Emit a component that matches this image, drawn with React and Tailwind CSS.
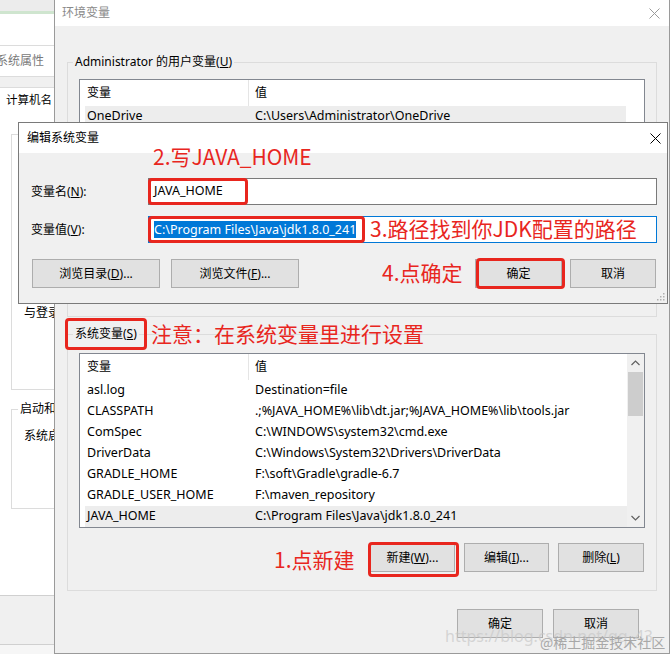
import { useState } from "react";

const userRows = [["OneDrive", "C:\\Users\\Administrator\\OneDrive"]];

const sysRows = [
  ["asl.log", "Destination=file"],
  ["CLASSPATH", ".;%JAVA_HOME%\\lib\\dt.jar;%JAVA_HOME%\\lib\\tools.jar"],
  ["ComSpec", "C:\\WINDOWS\\system32\\cmd.exe"],
  ["DriverData", "C:\\Windows\\System32\\Drivers\\DriverData"],
  ["GRADLE_HOME", "F:\\soft\\Gradle\\gradle-6.7"],
  ["GRADLE_USER_HOME", "F:\\maven_repository"],
  ["JAVA_HOME", "C:\\Program Files\\Java\\jdk1.8.0_241"],
];

function CloseX({ color = "#000" }) {
  return (
    <svg width="11" height="11" viewBox="0 0 11 11">
      <path d="M0.5 0.5 L10.5 10.5 M10.5 0.5 L0.5 10.5" stroke={color} strokeWidth="1" />
    </svg>
  );
}

function Btn({ children, className = "" }) {
  return (
    <div className={"flex items-center justify-center h-[29px] bg-[#e1e1e1] border border-[#adadad] text-[12px] text-black " + className}>
      {children}
    </div>
  );
}

function ListView({ rows, selected, height, scroll }) {
  return (
    <div className={"ml-[11px] w-[566px] border border-[#828790] bg-white flex " + height}>
      <div className="flex-1 flex flex-col overflow-hidden">
        <div className="flex h-[26px] items-center text-[12px]">
          <div className="w-[169px] h-full border-r border-[#e5e5e5] pl-[7px] flex items-center">变量</div>
          <div className="pl-[6px]">值</div>
        </div>
        {rows.map(([k, v]) => (
          <div
            key={k}
            className={"flex h-[21px] items-center text-[12.5px] ml-[5px] " + (k === selected ? "bg-[#ededed]" : "")}
          >
            <div className="w-[163px] pl-[2px] whitespace-nowrap">{k}</div>
            <div className="pl-[7px] whitespace-nowrap">{v}</div>
          </div>
        ))}
      </div>
      {scroll ? (
        <div className="w-[17px] bg-[#f0f0f0] flex flex-col items-center">
          <svg className="mt-[6px]" width="9" height="6" viewBox="0 0 9 6">
            <path d="M0.5 5 L4.5 1 L8.5 5" fill="none" stroke="#606060" strokeWidth="1.2" />
          </svg>
          <div className="mt-[6px] w-[15px] h-[44px] bg-[#cdcdcd]" />
          <div className="flex-1" />
          <svg className="mb-[6px]" width="9" height="6" viewBox="0 0 9 6">
            <path d="M0.5 1 L4.5 5 L8.5 1" fill="none" stroke="#606060" strokeWidth="1.2" />
          </svg>
        </div>
      ) : (
        <div className="w-[18px] bg-white" />
      )}
    </div>
  );
}

export default function App() {
  const [value] = useState("C:\\Program Files\\Java\\jdk1.8.0_241");

  return (
    <div className="relative w-[671px] h-[654px] overflow-hidden bg-white font-['Noto_Sans','Noto_Sans_CJK_SC',sans-serif] text-black">
      {/* background window: system properties */}
      <div className="absolute left-0 top-0 w-[54px] h-[654px] overflow-hidden bg-white flex flex-col text-[12px]">
        <div className="h-[11px] bg-[#ececec] shrink-0" />
        <div className="h-[3px] bg-[#cfe5cf] shrink-0" />
        <div className="h-[32px] bg-white border-b border-[#dcdcdc] shrink-0" />
        <div className="h-[31px] border-b border-[#dcdcdc] flex items-center text-[#7a7a7a] whitespace-nowrap -ml-[4px] shrink-0">系统属性</div>
        <div className="h-[10px] bg-[#f0f0f0] shrink-0" />
        <div className="h-[24px] border-t border-[#dcdcdc] flex items-center pl-[6px] text-[11.5px] whitespace-nowrap shrink-0">计算机名</div>
        <div className="ml-[11px] mt-[23px] w-[80px] h-[256px] border border-[#dcdcdc] pl-[12px] pt-[169px] whitespace-nowrap shrink-0">与登录</div>
        <div className="relative ml-[11px] mt-[19px] w-[80px] h-[100px] border border-[#dcdcdc] pl-[12px] pt-[17px] whitespace-nowrap shrink-0">
          <span className="absolute -top-[9px] left-[6px] px-[2px] bg-white leading-[16px]">启动和</span>
          系统启
        </div>
        <div className="flex-1" />
        <div className="h-[49px] border-t border-[#d0d0d0] bg-[#f0f0f0] shrink-0" />
        <div className="h-[10px] border-t border-[#d0d0d0] bg-[#f6f6f6] shrink-0" />
      </div>

      {/* environment variables window */}
      <div className="absolute left-[54px] top-0 w-[616px] h-[654px] border-l border-r border-b border-[#9a9a9a] bg-[#f0f0f0] flex flex-col">
        <div className="h-[26px] bg-white flex items-center justify-between pl-[7px] pr-[9px] shrink-0">
          <span className="text-[12px] text-[#8a8a8a]">环境变量</span>
          <CloseX color="#9a9a9a" />
        </div>
        <div className="flex flex-col pl-[12px]">
          <div className="relative mt-[36px] w-[590px] h-[255px] border border-[#dcdcdc]">
            <span className="absolute -top-[9px] left-[5px] px-[2px] bg-[#f0f0f0] text-[12px] leading-[16px] whitespace-nowrap">
              Administrator 的用户变量(<u>U</u>)
            </span>
            <div className="mt-[16px]">
              <ListView rows={userRows} selected="OneDrive" height="h-[200px]" />
            </div>
          </div>

          <div className="relative mt-[17px] w-[590px] h-[257px] border border-[#dcdcdc] flex flex-col">
            <span className="absolute -top-[9px] left-[5px] px-[2px] bg-[#f0f0f0] text-[12px] leading-[16px] whitespace-nowrap">
              系统变量(<u>S</u>)
            </span>
            <div className="mt-[18px]">
              <ListView rows={sysRows} selected="JAVA_HOME" height="h-[175px]" scroll />
            </div>
            <div className="mt-[15px] flex justify-end gap-[9px] pr-[12px]">
              <Btn className="w-[85px]">新建(<u>W</u>)...</Btn>
              <Btn className="w-[85px]">编辑(<u>I</u>)...</Btn>
              <Btn className="w-[86px]">删除(<u>L</u>)</Btn>
            </div>
          </div>

          <div className="mt-[18px] flex justify-end gap-[10px] pr-[30px]">
            <Btn className="w-[86px]">确定</Btn>
            <Btn className="w-[86px]">取消</Btn>
          </div>
        </div>
      </div>

      {/* edit system variable dialog */}
      <div className="absolute left-[18px] top-[122px] w-[650px] h-[182px] border border-[#7a7a7a] bg-[#f0f0f0] flex flex-col">
        <div className="h-[30px] bg-white flex items-center justify-between pl-[8px] pr-[6px] shrink-0">
          <span className="text-[12px]">编辑系统变量</span>
          <CloseX />
        </div>
        <div className="flex flex-col pl-[12px] text-[12px]">
          <div className="mt-[25px] grid grid-cols-[117px_509px] items-center">
            <span>变量名(<u>N</u>):</span>
            <div className="h-[27px] border border-[#7a7a7a] bg-white flex items-center pl-[5px] text-[12.5px]">JAVA_HOME</div>
          </div>
          <div className="mt-[11px] grid grid-cols-[117px_509px] items-center">
            <span>变量值(<u>V</u>):</span>
            <div className="h-[27px] border border-[#0078d7] bg-white flex items-center pl-[5px]">
              <span className="bg-[#0078d7] text-white text-[12.5px] leading-[17px]">{value}</span>
            </div>
          </div>
          <div className="mt-[16px] flex justify-between pr-[11px] pl-[1px]">
            <div className="flex gap-[11px]">
              <Btn className="w-[128px]">浏览目录(<u>D</u>)...</Btn>
              <Btn className="w-[128px]">浏览文件(<u>F</u>)...</Btn>
            </div>
            <div className="flex gap-[8px]">
              <Btn className="w-[87px]">确定</Btn>
              <Btn className="w-[86px]">取消</Btn>
            </div>
          </div>
        </div>
        <svg className="absolute right-[2px] bottom-[2px]" width="8" height="8" viewBox="0 0 8 8">
          <rect x="6" y="0" width="1.5" height="1.5" fill="#b0b0b0" />
          <rect x="3" y="3" width="1.5" height="1.5" fill="#b0b0b0" />
          <rect x="6" y="3" width="1.5" height="1.5" fill="#b0b0b0" />
          <rect x="0" y="6" width="1.5" height="1.5" fill="#b0b0b0" />
          <rect x="3" y="6" width="1.5" height="1.5" fill="#b0b0b0" />
          <rect x="6" y="6" width="1.5" height="1.5" fill="#b0b0b0" />
        </svg>
      </div>

      {/* red annotations */}
      <div className="font-['Noto_Sans_CJK_SC',sans-serif] text-[21px] leading-none text-[#e8261e] whitespace-nowrap">
        <span className="absolute left-[153px] top-[146px]">2.写JAVA_HOME</span>
        <span className="absolute left-[370px] top-[218px]">3.路径找到你JDK配置的路径</span>
        <span className="absolute left-[382px] top-[262px]">4.点确定</span>
        <span className="absolute left-[151px] top-[323px]">注意：在系统变量里进行设置</span>
        <span className="absolute left-[274px] top-[549px]">1.点新建</span>
      </div>
      <div className="absolute left-[148px] top-[178px] w-[100px] h-[27px] border-[3px] border-[#e8261e] rounded-[4px]" />
      <div className="absolute left-[148px] top-[216px] w-[217px] h-[27px] border-[3px] border-[#e8261e] rounded-[4px]" />
      <div className="absolute left-[476px] top-[258px] w-[89px] h-[31px] border-[3px] border-[#e8261e] rounded-[4px]" />
      <div className="absolute left-[65px] top-[318px] w-[82px] h-[32px] border-[3px] border-[#e8261e] rounded-[4px]" />
      <div className="absolute left-[368px] top-[542px] w-[91px] h-[35px] border-[3px] border-[#e8261e] rounded-[4px]" />

      {/* watermark */}
      <span className="absolute left-[445px] top-[624px] text-[16px] text-[#c8c8c8]/70 whitespace-nowrap">https://blog.csdn.net/qq_43</span>
      <span className="absolute left-[540px] top-[632px] text-[14px] text-[#a8a8a8] whitespace-nowrap font-['Noto_Sans_CJK_SC',sans-serif]">@稀土掘金技术社区</span>
    </div>
  );
}
